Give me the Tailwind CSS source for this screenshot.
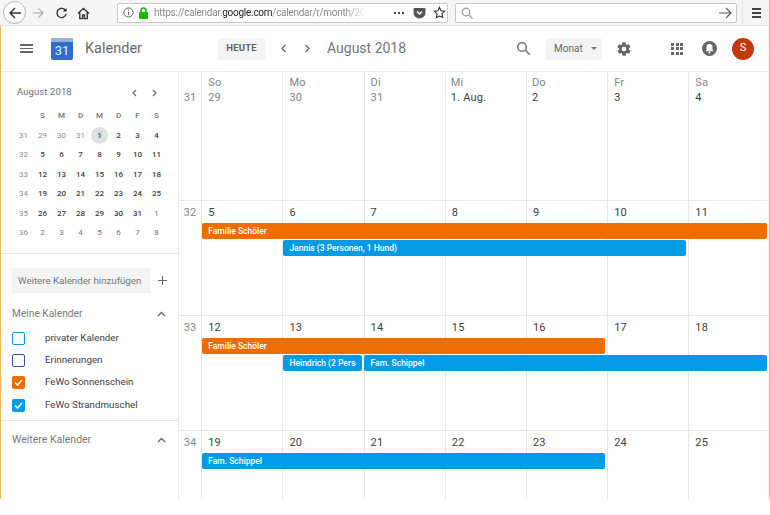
<!DOCTYPE html>
<html lang="de">
<head>
<meta charset="UTF-8">
<title>Kalender</title>
<script src="https://cdn.jsdelivr.net/npm/@tailwindcss/browser@4"></script>
</head>
<body class="bg-white font-['Roboto',sans-serif] overflow-hidden">
<div class="w-[770px] h-[499px] flex flex-col border-r border-[#f7b45c] overflow-hidden">

  <!-- browser toolbar -->
  <div class="h-[26px] shrink-0 pl-[1px] bg-[#f5f5f5] border-b border-[#e6e6e6] flex items-center text-[#3c3c3c]">
    <div class="ml-[2px] w-[23px] h-[23px] shrink-0 rounded-full border border-[#b5b5b5] bg-white flex items-center justify-center">
      <svg width="14" height="14" viewBox="0 0 14 14" fill="none" stroke="#333" stroke-width="1.4"><path d="M13 7H2M7 2L2 7l5 5"/></svg>
    </div>
    <svg class="ml-[6px] shrink-0" width="13" height="14" viewBox="0 0 14 14" fill="none" stroke="#a8a8a8" stroke-width="1.2"><path d="M1 7h11M7 2l5 5-5 5"/></svg>
    <svg class="ml-[10px] shrink-0" width="13" height="14" viewBox="0 0 14 14" fill="none" stroke="#333" stroke-width="1.5"><path d="M11.5 4.5A5 5 0 1 0 12 8"/><path d="M12.5 1.5v4h-4z" fill="#333" stroke="none"/></svg>
    <svg class="ml-[9px] shrink-0" width="13" height="14" viewBox="0 0 14 14" fill="none" stroke="#333" stroke-width="1.5"><path d="M1 7.500L7 2l6 5.500M3 6.500V13h3V9h2v4h3V6.500"/></svg>
    <div class="ml-[27px] w-[331px] h-[20px] shrink-0 bg-white border border-[#c8c8c8] rounded-[2px] flex items-center">
      <svg class="ml-[5px] shrink-0" width="11" height="11" viewBox="0 0 12 12" fill="none" stroke="#555"><circle cx="6" cy="6" r="5"/><path d="M6 5.200V9M6 3v1.200"/></svg>
      <svg class="ml-[4px] shrink-0" width="11" height="12" viewBox="0 0 11 12"><rect x="1" y="5" width="9" height="7" rx="1" fill="#12bc00"/><path d="M3 5.500V3.500a2.500 2.500 0 0 1 5 0v2" fill="none" stroke="#12bc00" stroke-width="1.600"/></svg>
      <div class="ml-[5px] w-[212px] shrink-0 text-[10px] tracking-[-0.27px] whitespace-nowrap overflow-hidden text-[#8a8a8a] [mask-image:linear-gradient(to_right,black_90%,transparent)]">https://calendar.<span class="text-[#222]">google.com</span>/calendar/r/month/2018/8/1</div>
      <div class="flex gap-[2px] ml-[28px] shrink-0"><span class="w-[2px] h-[2px] bg-[#444]"></span><span class="w-[2px] h-[2px] bg-[#444]"></span><span class="w-[2px] h-[2px] bg-[#444]"></span></div>
      <svg class="ml-[9px] shrink-0" width="13" height="12" viewBox="0 0 13 12"><path d="M1.500 1h10A1 1 0 0 1 12.500 2v3.500a6 6 0 0 1-12 0V2A1 1 0 0 1 1.500 1z" fill="#555"/><path d="M4 4.500l2.500 2.500L9 4.500" fill="none" stroke="#fff" stroke-width="1.500"/></svg>
      <svg class="ml-[7px] shrink-0" width="13" height="13" viewBox="0 0 14 14" fill="none" stroke="#333" stroke-width="1.200"><path d="M7 1.500l1.700 3.600 3.800.5-2.800 2.700.7 3.900L7 10.800l-3.400 1.900.7-3.900L1.500 5.600l3.800-.5z"/></svg>
    </div>
    <div class="ml-[7px] w-[282px] h-[20px] shrink-0 bg-white border border-[#c8c8c8] rounded-[2px] flex items-center justify-between">
      <svg class="ml-[5px]" width="12" height="12" viewBox="0 0 12 12" fill="none" stroke="#999" stroke-width="1.200"><circle cx="5" cy="5" r="3.800"/><path d="M8 8l3.500 3.500"/></svg>
      <svg class="mr-[4px]" width="13" height="12" viewBox="0 0 13 12" fill="none" stroke="#555" stroke-width="1.100"><path d="M0 6h12M7 1l5 5-5 5"/></svg>
    </div>
    <div class="ml-[5px] h-[26px] border-l border-[#e2e2e2] pl-[9px] flex flex-col justify-center gap-[2px]">
      <span class="block w-[9px] h-[2px] bg-[#444]"></span><span class="block w-[9px] h-[2px] bg-[#444]"></span><span class="block w-[9px] h-[2px] bg-[#444]"></span>
    </div>
  </div>

  <div class="flex-1 flex flex-col min-h-0 border-l border-[#f7b45c]">
  <!-- calendar header -->
  <div class="h-[46px] shrink-0 flex items-center border-b border-[#e6e6e6]">
    <div class="ml-[19px] w-[13px] shrink-0 flex flex-col gap-[2px]">
      <span class="block h-[1.500px] bg-[#666]"></span><span class="block h-[1.500px] bg-[#666]"></span><span class="block h-[1.500px] bg-[#666]"></span>
    </div>
    <div class="ml-[18px] w-[22px] h-[22px] shrink-0 rounded-[2px] bg-[#2f6cd0] flex flex-col items-center overflow-hidden">
      <div class="w-full h-[4px] bg-[#9ab0d6] shrink-0"></div>
      <div class="text-[#e8f0fe] text-[13px] leading-[18px]">31</div>
    </div>
    <div class="ml-[12px] w-[133px] shrink-0 text-[#6a6a6a] text-[14.500px]">Kalender</div>
    <div class="w-[47px] h-[22px] shrink-0 bg-[#f4f4f4] rounded-[2px] flex items-center justify-center text-[9.500px] font-bold text-[#5f6368] tracking-[0.2px]">HEUTE</div>
    <svg class="ml-[15px] shrink-0" width="7" height="9" viewBox="0 0 7 9" fill="none" stroke="#666" stroke-width="1.300"><path d="M5.500 1L2 4.500 5.500 8"/></svg>
    <svg class="ml-[17px] shrink-0" width="7" height="9" viewBox="0 0 7 9" fill="none" stroke="#666" stroke-width="1.300"><path d="M1.500 1L5 4.500 1.500 8"/></svg>
    <div class="ml-[16px] w-[189px] shrink-0 text-[#757575] text-[14px]">August 2018</div>
    <svg class="shrink-0" width="15" height="15" viewBox="0 0 15 15" fill="none" stroke="#777" stroke-width="1.600"><circle cx="6" cy="6" r="4.300"/><path d="M9.300 9.300l4.500 4.500"/></svg>
    <div class="ml-[15px] w-[56px] h-[22px] shrink-0 bg-[#f4f4f4] rounded-[2px] flex items-center text-[10px] text-[#666] pl-[8px]">
      Monat<span class="ml-[8px] w-0 h-0 border-x-[3.500px] border-x-transparent border-t-[3.500px] border-t-[#777]"></span>
    </div>
    <svg class="ml-[14px] shrink-0" width="16" height="16" viewBox="0 0 24 24" fill="#666"><path d="M19.400 13c.04-.3.1-.7.1-1s-.03-.7-.1-1l2.100-1.600c.2-.150.250-.4.120-.650l-2-3.500c-.12-.2-.4-.3-.6-.2l-2.500 1c-.5-.400-1.100-.7-1.700-1l-.4-2.600A.5.500 0 0 0 14 2h-4c-.25 0-.450.200-.500.400l-.4 2.700c-.6.250-1.200.600-1.700 1l-2.500-1c-.2-.1-.500 0-.600.200l-2 3.500c-.1.200-.1.500.1.650L4.600 11c0 .3-.1.700-.1 1s.03.7.1 1l-2.100 1.600c-.2.150-.25.400-.1.650l2 3.500c.1.200.4.300.6.200l2.500-1c.5.400 1.100.7 1.700 1l.4 2.600c0 .25.250.45.500.45h4c.25 0 .45-.2.500-.42l.4-2.650c.6-.25 1.200-.6 1.700-1l2.500 1c.2.100.5 0 .6-.2l2-3.500c.1-.2.100-.5-.1-.65zM12 15.500a3.500 3.500 0 1 1 0-7 3.500 3.500 0 0 1 0 7z"/></svg>
    <div class="ml-[39px] grid grid-cols-3 gap-[1.500px] w-[12px] shrink-0">
      <span class="w-[3px] h-[3px] bg-[#666]"></span><span class="w-[3px] h-[3px] bg-[#666]"></span><span class="w-[3px] h-[3px] bg-[#666]"></span>
      <span class="w-[3px] h-[3px] bg-[#666]"></span><span class="w-[3px] h-[3px] bg-[#666]"></span><span class="w-[3px] h-[3px] bg-[#666]"></span>
      <span class="w-[3px] h-[3px] bg-[#666]"></span><span class="w-[3px] h-[3px] bg-[#666]"></span><span class="w-[3px] h-[3px] bg-[#666]"></span>
    </div>
    <svg class="ml-[19px] shrink-0" width="15" height="15" viewBox="0 0 15 15"><circle cx="7.500" cy="7.500" r="7.500" fill="#666"/><path d="M7.500 3a3 3 0 0 0-3 3v3l-1 1.200h8L10.500 9V6a3 3 0 0 0-3-3z" fill="#fff"/><circle cx="7.500" cy="11.500" r="1" fill="#fff"/></svg>
    <div class="ml-[15px] w-[22px] h-[22px] shrink-0 rounded-full bg-[#c1390e] text-white text-[11px] flex items-center justify-center">S</div>
  </div>

  <div class="flex-1 flex min-h-0">
    <!-- sidebar -->
    <aside class="w-[178px] shrink-0 border-r border-[#e6e6e6] flex flex-col">
      <div class="border-b border-[#e6e6e6] h-[182px] shrink-0">
        <div class="flex items-center pt-[13px] pl-[16px] h-[28px]">
          <div class="w-[114px] text-[9.500px] text-[#6f6f6f] tracking-[0.1px]">August 2018</div>
          <svg width="6" height="8" viewBox="0 0 6 8" fill="none" stroke="#666" stroke-width="1.100"><path d="M5 1L2 4l3 3"/></svg>
          <svg class="ml-[15px]" width="6" height="8" viewBox="0 0 6 8" fill="none" stroke="#666" stroke-width="1.100"><path d="M1 1l3 3-3 3"/></svg>
        </div>
        <div class="mt-[6.500px] ml-[13px] grid grid-cols-[repeat(8,19px)] auto-rows-[19.500px] text-[8px] text-center items-center font-medium text-[#3c4043]">
          <span></span><span class="text-[#70757a]">S</span><span class="text-[#70757a]">M</span><span class="text-[#70757a]">D</span><span class="text-[#70757a]">M</span><span class="text-[#70757a]">D</span><span class="text-[#70757a]">F</span><span class="text-[#70757a]">S</span>
          <span class="text-[#8a8f94] font-normal">31</span><span class="text-[#8a8f94] font-normal">29</span><span class="text-[#8a8f94] font-normal">30</span><span class="text-[#8a8f94] font-normal">31</span><span class="justify-self-center w-[17px] h-[17px] rounded-full bg-[#e0e0e0] flex items-center justify-center">1</span><span>2</span><span>3</span><span>4</span>
          <span class="text-[#8a8f94] font-normal">32</span><span>5</span><span>6</span><span>7</span><span>8</span><span>9</span><span>10</span><span>11</span>
          <span class="text-[#8a8f94] font-normal">33</span><span>12</span><span>13</span><span>14</span><span>15</span><span>16</span><span>17</span><span>18</span>
          <span class="text-[#8a8f94] font-normal">34</span><span>19</span><span>20</span><span>21</span><span>22</span><span>23</span><span>24</span><span>25</span>
          <span class="text-[#8a8f94] font-normal">35</span><span>26</span><span>27</span><span>28</span><span>29</span><span>30</span><span>31</span><span class="text-[#70757a] font-normal">1</span>
          <span class="text-[#8a8f94] font-normal">36</span><span class="text-[#70757a] font-normal">2</span><span class="text-[#70757a] font-normal">3</span><span class="text-[#70757a] font-normal">4</span><span class="text-[#70757a] font-normal">5</span><span class="text-[#70757a] font-normal">6</span><span class="text-[#70757a] font-normal">7</span><span class="text-[#70757a] font-normal">8</span>
        </div>
      </div>
      <div class="mt-[14px] ml-[11px] flex items-center">
        <div class="w-[139px] h-[25px] shrink-0 bg-[#f4f4f4] flex items-center pl-[6px] pt-[2px] text-[9.700px] text-[#70757a] whitespace-nowrap">Weitere Kalender hinzufügen</div>
        <svg class="ml-[7px] shrink-0" width="9" height="9" viewBox="0 0 9 9" stroke="#666"><path d="M4.500 0v9M0 4.500h9"/></svg>
      </div>
      <div class="mt-[13px] ml-[11px] flex items-center h-[16px] text-[10.200px] text-[#7b7b7b]">
        <span class="w-[145px]">Meine Kalender</span>
        <svg width="9" height="6" viewBox="0 0 9 6" fill="none" stroke="#666" stroke-width="1.300"><path d="M1 5l3.500-3.500L8 5"/></svg>
      </div>
      <div class="mt-[5px] ml-[11px] flex flex-col text-[9.800px] text-[#3c4043]">
        <div class="h-[22.300px] flex items-center"><span class="w-[13px] h-[13px] rounded-[2px] border-[1.500px] border-[#039be5]"></span><span class="ml-[20px]">privater Kalender</span></div>
        <div class="h-[22.300px] flex items-center"><span class="w-[13px] h-[13px] rounded-[2px] border-[1.500px] border-[#3f51b5]"></span><span class="ml-[20px]">Erinnerungen</span></div>
        <div class="h-[22.300px] flex items-center"><span class="w-[13px] h-[13px] rounded-[2px] bg-[#ef6c00] flex items-center justify-center"><svg width="9" height="7" viewBox="0 0 9 7" fill="none" stroke="#fff" stroke-width="1.500"><path d="M1 3.500l2.500 2.500L8 1"/></svg></span><span class="ml-[20px]">FeWo Sonnenschein</span></div>
        <div class="h-[22.300px] flex items-center"><span class="w-[13px] h-[13px] rounded-[2px] bg-[#039be5] flex items-center justify-center"><svg width="9" height="7" viewBox="0 0 9 7" fill="none" stroke="#fff" stroke-width="1.500"><path d="M1 3.500l2.500 2.500L8 1"/></svg></span><span class="ml-[20px]">FeWo Strandmuschel</span></div>
      </div>
      <div class="mt-[4px] border-t border-[#e6e6e6] pt-[11px] pl-[11px] flex items-center text-[10.500px] text-[#7b7b7b]">
        <span class="w-[145px]">Weitere Kalender</span>
        <svg width="9" height="6" viewBox="0 0 9 6" fill="none" stroke="#666" stroke-width="1.300"><path d="M1 5l3.500-3.500L8 5"/></svg>
      </div>
    </aside>

    <!-- month grid -->
    <main class="flex-1 flex flex-col text-[11px] text-[#3c4043] tracking-[0.2px]">
      <section class="h-[129px] shrink-0 border-b border-[#e6e6e6] grid grid-cols-[22.200px_repeat(6,81.200px)_1fr]">
        <div class="pt-[18px] text-center text-[#80868b]">31</div>
        <div class="border-l border-[#e6e6e6] pl-[6px] pt-[3px] leading-[15px] text-[#80868b]">So<br>29</div>
        <div class="border-l border-[#e6e6e6] pl-[6px] pt-[3px] leading-[15px] text-[#80868b]">Mo<br>30</div>
        <div class="border-l border-[#e6e6e6] pl-[6px] pt-[3px] leading-[15px] text-[#80868b]">Di<br>31</div>
        <div class="border-l border-[#e6e6e6] pl-[5px] pt-[3px] leading-[15px]"><span class="text-[#80868b]">Mi</span><br>1. Aug.</div>
        <div class="border-l border-[#e6e6e6] pl-[5px] pt-[3px] leading-[15px]"><span class="text-[#80868b]">Do</span><br>2</div>
        <div class="border-l border-[#e6e6e6] pl-[6px] pt-[3px] leading-[15px]"><span class="text-[#80868b]">Fr</span><br>3</div>
        <div class="border-l border-[#e6e6e6] pl-[6px] pt-[3px] leading-[15px]"><span class="text-[#80868b]">Sa</span><br>4</div>
      </section>

      <section class="h-[115px] shrink-0 border-b border-[#e6e6e6] grid grid-cols-[22.200px_repeat(6,81.200px)_1fr] grid-rows-[22px_17px_17px_1fr]">
        <div class="col-start-1 row-start-1 row-span-4 pt-[4px] text-center text-[#80868b]">32</div>
        <div class="col-start-2 row-start-1 row-span-4 border-l border-[#e6e6e6] pl-[6px] pt-[4px]">5</div>
        <div class="col-start-3 row-start-1 row-span-4 border-l border-[#e6e6e6] pl-[6px] pt-[4px]">6</div>
        <div class="col-start-4 row-start-1 row-span-4 border-l border-[#e6e6e6] pl-[6px] pt-[4px]">7</div>
        <div class="col-start-5 row-start-1 row-span-4 border-l border-[#e6e6e6] pl-[6px] pt-[4px]">8</div>
        <div class="col-start-6 row-start-1 row-span-4 border-l border-[#e6e6e6] pl-[6px] pt-[4px]">9</div>
        <div class="col-start-7 row-start-1 row-span-4 border-l border-[#e6e6e6] pl-[6px] pt-[4px]">10</div>
        <div class="col-start-8 row-start-1 row-span-4 border-l border-[#e6e6e6] pl-[6px] pt-[4px]">11</div>
        <div class="row-start-2 col-start-2 col-span-7 ml-[1px] mr-[2px] h-[16px] rounded-[2px] bg-[#ef6c00] text-white text-[8.500px] tracking-normal font-medium leading-[16px] pl-[6px]">Familie Schöler</div>
        <div class="row-start-3 col-start-3 col-span-5 ml-[1px] mr-[2px] h-[16px] rounded-[2px] bg-[#039be5] text-white text-[8.500px] tracking-normal font-medium leading-[16px] pl-[6px]">Jannis (3 Personen, 1 Hund)</div>
      </section>

      <section class="h-[115px] shrink-0 border-b border-[#e6e6e6] grid grid-cols-[22.200px_repeat(6,81.200px)_1fr] grid-rows-[22px_17px_17px_1fr]">
        <div class="col-start-1 row-start-1 row-span-4 pt-[4px] text-center text-[#80868b]">33</div>
        <div class="col-start-2 row-start-1 row-span-4 border-l border-[#e6e6e6] pl-[6px] pt-[4px]">12</div>
        <div class="col-start-3 row-start-1 row-span-4 border-l border-[#e6e6e6] pl-[6px] pt-[4px]">13</div>
        <div class="col-start-4 row-start-1 row-span-4 border-l border-[#e6e6e6] pl-[6px] pt-[4px]">14</div>
        <div class="col-start-5 row-start-1 row-span-4 border-l border-[#e6e6e6] pl-[6px] pt-[4px]">15</div>
        <div class="col-start-6 row-start-1 row-span-4 border-l border-[#e6e6e6] pl-[6px] pt-[4px]">16</div>
        <div class="col-start-7 row-start-1 row-span-4 border-l border-[#e6e6e6] pl-[6px] pt-[4px]">17</div>
        <div class="col-start-8 row-start-1 row-span-4 border-l border-[#e6e6e6] pl-[6px] pt-[4px]">18</div>
        <div class="row-start-2 col-start-2 col-span-5 ml-[1px] mr-[2px] h-[16px] rounded-[2px] bg-[#ef6c00] text-white text-[8.500px] tracking-normal font-medium leading-[16px] pl-[6px]">Familie Schöler</div>
        <div class="row-start-3 col-start-3 ml-[1px] mr-[2px] h-[16px] rounded-[2px] bg-[#039be5] text-white text-[8.500px] tracking-normal font-medium leading-[16px] px-[6px]"><div class="overflow-hidden whitespace-nowrap">Heindrich (2 Personen)</div></div>
        <div class="row-start-3 col-start-4 col-span-5 mr-[2px] h-[16px] rounded-[2px] bg-[#039be5] text-white text-[8.500px] tracking-normal font-medium leading-[16px] pl-[7px]">Fam. Schippel</div>
      </section>

      <section class="flex-1 grid grid-cols-[22.200px_repeat(6,81.200px)_1fr] grid-rows-[22px_17px_1fr]">
        <div class="col-start-1 row-start-1 row-span-3 pt-[4px] text-center text-[#80868b]">34</div>
        <div class="col-start-2 row-start-1 row-span-3 border-l border-[#e6e6e6] pl-[6px] pt-[4px]">19</div>
        <div class="col-start-3 row-start-1 row-span-3 border-l border-[#e6e6e6] pl-[6px] pt-[4px]">20</div>
        <div class="col-start-4 row-start-1 row-span-3 border-l border-[#e6e6e6] pl-[6px] pt-[4px]">21</div>
        <div class="col-start-5 row-start-1 row-span-3 border-l border-[#e6e6e6] pl-[6px] pt-[4px]">22</div>
        <div class="col-start-6 row-start-1 row-span-3 border-l border-[#e6e6e6] pl-[6px] pt-[4px]">23</div>
        <div class="col-start-7 row-start-1 row-span-3 border-l border-[#e6e6e6] pl-[6px] pt-[4px]">24</div>
        <div class="col-start-8 row-start-1 row-span-3 border-l border-[#e6e6e6] pl-[6px] pt-[4px]">25</div>
        <div class="row-start-2 col-start-2 col-span-5 ml-[1px] mr-[2px] h-[16px] rounded-[2px] bg-[#039be5] text-white text-[8.500px] tracking-normal font-medium leading-[16px] pl-[6px]">Fam. Schippel</div>
      </section>
    </main>
  </div>
  </div>
</div>
</body>
</html>
